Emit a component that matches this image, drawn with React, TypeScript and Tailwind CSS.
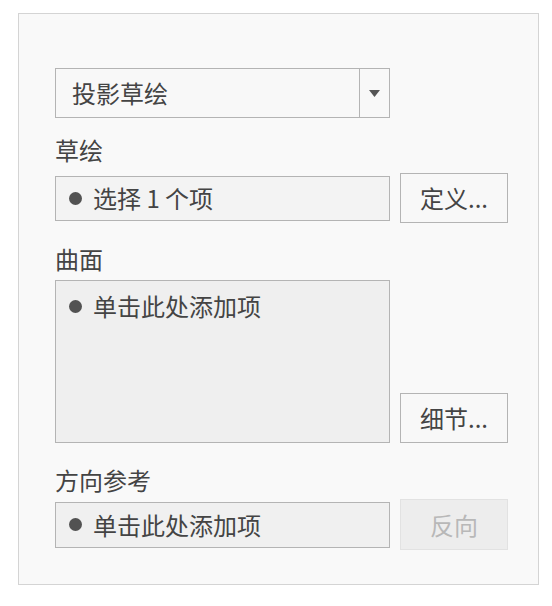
export default function App() {
  const font = { fontFamily: '"Microsoft YaHei", "Noto Sans CJK SC", "Noto Sans", sans-serif' };
  return (
    <div className="min-h-screen w-[552px] h-[606px] bg-white pt-[13px] pl-[18px]" style={font}>
      <div className="w-[521px] h-[572px] border border-[#d4d4d4] bg-[#f9f9f9] pl-[36px] pt-[54px] text-[#444444] text-[24px]">
        {/* type dropdown */}
        <div className="flex w-[335px] h-[50px] border border-[#b4b4b4] bg-[#f8f8f8]">
          <div className="flex-1 flex items-center pl-[16px] leading-none">投影草绘</div>
          <div className="w-[30px] border-l border-[#b4b4b4] flex items-center justify-center">
            <svg width="11" height="7" viewBox="0 0 11 7">
              <path d="M0 0 L11 0 L5.5 7 Z" fill="#555" />
            </svg>
          </div>
        </div>

        <div className="mt-[18px] h-[28px] leading-[28px]">草绘</div>
        <div className="mt-[9px] flex items-center gap-[10px] h-[50px]">
          <div className="w-[335px] h-[45px] border border-[#b4b4b4] bg-[#f3f3f3] flex items-center pl-[13px]">
            <span className="w-[13px] h-[13px] rounded-full bg-[#525252] mr-[11px]" />
            <span className="leading-none">选择 1 个项</span>
          </div>
          <button className="w-[108px] h-[50px] border border-[#b4b4b4] bg-[#f8f8f8] text-[#444444] leading-none">定义...</button>
        </div>

        <div className="mt-[22px] h-[28px] leading-[28px]">曲面</div>
        <div className="mt-[7px] flex items-end gap-[10px]">
          <div className="w-[335px] h-[163px] border border-[#b4b4b4] bg-[#efefef] pl-[13px] pt-[11px]">
            <div className="flex items-center h-[28px]">
              <span className="w-[13px] h-[13px] rounded-full bg-[#525252] mr-[11px]" />
              <span className="leading-none">单击此处添加项</span>
            </div>
          </div>
          <button className="w-[108px] h-[50px] border border-[#b4b4b4] bg-[#f8f8f8] text-[#444444] leading-none">细节...</button>
        </div>

        <div className="mt-[23px] h-[28px] leading-[28px]">方向参考</div>
        <div className="mt-[5px] flex items-center gap-[10px] h-[51px]">
          <div className="w-[335px] h-[46px] border border-[#b4b4b4] bg-[#f0f0f0] flex items-center pl-[13px]">
            <span className="w-[13px] h-[13px] rounded-full bg-[#525252] mr-[11px]" />
            <span className="leading-none">单击此处添加项</span>
          </div>
          <button disabled className="w-[108px] h-[51px] border border-[#e2e2e2] bg-[#ededed] text-[#b8b8b8] leading-none">反向</button>
        </div>
      </div>
    </div>
  );
}
